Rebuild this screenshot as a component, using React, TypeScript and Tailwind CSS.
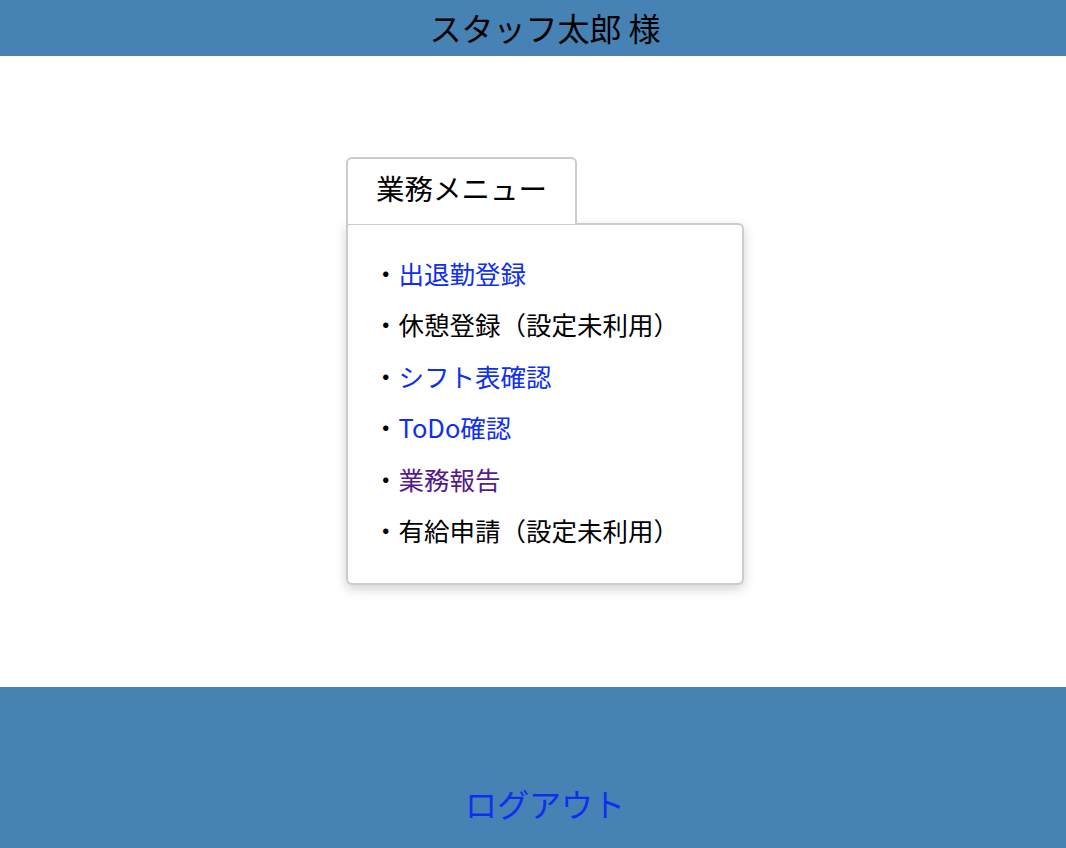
import React from "react";

const font = { fontFamily: '"Noto Sans CJK JP", "Noto Sans", sans-serif' };

export default function App() {
  const items: { label: string; kind: "link" | "visited" | "text" }[] = [
    { label: "出退勤登録", kind: "link" },
    { label: "休憩登録（設定未利用）", kind: "text" },
    { label: "シフト表確認", kind: "link" },
    { label: "ToDo確認", kind: "link" },
    { label: "業務報告", kind: "visited" },
    { label: "有給申請（設定未利用）", kind: "text" },
  ];
  return (
    <div className="flex min-h-screen flex-col bg-white text-black" style={font}>
      <header className="flex h-[56px] items-center justify-center bg-[#4682b4] pb-[2px] pl-[24px] text-[32px] leading-none">
        スタッフ太郎 様
      </header>
      <main className="flex flex-1 justify-center pl-[24px] pt-[101px]">
        <div className="w-[398px]">
          <div className="relative z-10 -mb-px flex h-[67px] w-[231px] items-center justify-center rounded-t-[6px] border-2 border-b-0 border-[#cccccc] bg-white pb-[6px] text-[28.5px]">
            業務メニュー
          </div>
          <div className="rounded-b-[6px] rounded-tr-[6px] border-2 border-[#cccccc] bg-white pb-[28px] pl-[25px] pt-[22px] shadow-[0_4px_12px_rgba(0,0,0,0.18)]">
            <ul className="flex flex-col text-[25.5px] leading-[51.4px]">
              {items.map((it) => (
                <li key={it.label} className="whitespace-nowrap">
                  <span>・</span>
                  {it.kind === "text" ? (
                    <span>{it.label}</span>
                  ) : (
                    <a
                      href="#"
                      className={it.kind === "link" ? "text-[#0f2ff0]" : "text-[#551a8b]"}
                    >
                      {it.label}
                    </a>
                  )}
                </li>
              ))}
            </ul>
          </div>
        </div>
      </main>
      <footer className="flex h-[161px] items-start justify-center bg-[#4682b4] pl-[24px] pt-[100px]">
        <a href="#" className="text-[32px] leading-none text-[#0f2ff0]">
          ログアウト
        </a>
      </footer>
    </div>
  );
}
